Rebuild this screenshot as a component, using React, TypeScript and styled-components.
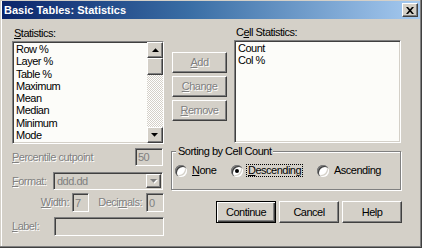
import React from 'react';
import styled, { createGlobalStyle, css } from 'styled-components';

const Global = createGlobalStyle`
  html, body { margin: 0; padding: 0; background: #d4d0c8; }
  body { font-family: "Liberation Sans", Arial, sans-serif; font-size: 11px; }
  * { box-sizing: border-box; }
`;

const raised = css`
  border: 1px solid;
  border-color: #ffffff #404040 #404040 #ffffff;
  box-shadow: inset -1px -1px #808080, inset 1px 1px #d4d0c8;
  background: #d4d0c8;
`;

const sunken = css`
  border: 1px solid;
  border-color: #808080 #ffffff #ffffff #808080;
  box-shadow: inset 1px 1px #404040, inset -1px -1px #d4d0c8;
`;

const disabledText = css`
  color: #808080;
  text-shadow: 1px 1px #ffffff;
`;

const Window = styled.div`
  width: 422px;
  height: 248px;
  background: #d4d0c8;
  padding: 1px 2px 2px 2px;
  box-shadow: inset -1px -1px #404040, inset -2px -2px #808080, inset 1px 1px #d4d0c8, inset 2px 0 #ffffff;
  display: flex;
  flex-direction: column;
  font-family: "Liberation Sans", Arial, sans-serif;
  font-size: 11px;
  letter-spacing: -0.5px;
  color: #000;
`;

const TitleBar = styled.div`
  height: 18px;
  flex: none;
  display: flex;
  align-items: center;
  justify-content: space-between;
  padding: 0 2px 0 2px;
  background: linear-gradient(to right, #0a246a, #3a6ea5 45%, #a6caf0);
`;

const TitleText = styled.span`
  color: #ffffff;
  font-weight: bold;
  font-size: 11px;
  letter-spacing: 0;
  line-height: 13px;
`;

const CloseButton = styled.div`
  ${raised};
  width: 16px;
  height: 14px;
  display: flex;
  align-items: center;
  justify-content: center;
`;

const Body = styled.div`
  flex: 1;
  display: flex;
  gap: 7px;
  padding: 8px 0 0 10px;
`;

const LeftCol = styled.div`
  width: 152px;
  display: flex;
  flex-direction: column;
`;

const RightCol = styled.div`
  width: 231px;
  margin-top: -1px;
  display: flex;
  flex-direction: column;
`;

const Caption = styled.div<{ $disabled?: boolean; $indent?: number }>`
  height: 13px;
  line-height: 13px;
  white-space: nowrap;
  padding-left: ${(p) => p.$indent ?? 0}px;
  ${(p) => p.$disabled && disabledText};
`;

const ListBox = styled.div<{ $w: number }>`
  ${sunken};
  width: ${(p) => p.$w}px;
  height: 103px;
  margin-top: 1px;
  display: flex;
  background: #fcfcf9;
  overflow: hidden;
`;

const ListItems = styled.div`
  flex: 1;
  padding: 1px 0 0 3px;
  overflow: hidden;
`;

const ListItem = styled.div`
  height: 12.3px;
  line-height: 12.3px;
  white-space: nowrap;
`;

const ScrollBar = styled.div`
  width: 16px;
  flex: none;
  display: flex;
  flex-direction: column;
`;

const ScrollButton = styled.div`
  ${raised};
  width: 16px;
  height: 16px;
  flex: none;
  display: flex;
  align-items: center;
  justify-content: center;
`;

const Track = styled.div`
  flex: 1;
  background-color: #ffffff;
  background-image: conic-gradient(#d4d0c8 25%, transparent 0 50%, #d4d0c8 0 75%, transparent 0);
  background-size: 2px 2px;
`;

const Thumb = styled.div`
  ${raised};
  width: 16px;
  height: 17px;
`;

const FieldRow = styled.div<{ $h: number; $mt: number }>`
  height: ${(p) => p.$h}px;
  margin-top: ${(p) => p.$mt}px;
  display: flex;
  align-items: center;
`;

const RowLabel = styled.div<{ $w?: number; $right?: boolean; $pr?: number; $ml?: number }>`
  ${disabledText};
  width: ${(p) => (p.$w ? `${p.$w}px` : 'auto')};
  flex: ${(p) => (p.$w ? 'none' : '1')};
  margin-left: ${(p) => p.$ml ?? 0}px;
  padding-right: ${(p) => p.$pr ?? 0}px;
  text-align: ${(p) => (p.$right ? 'right' : 'left')};
  white-space: nowrap;
  line-height: 13px;
`;

const TextBox = styled.div<{ $w: number; $mr?: number }>`
  ${sunken};
  width: ${(p) => p.$w}px;
  height: 100%;
  flex: none;
  margin-right: ${(p) => p.$mr ?? 0}px;
  background: #d4d0c8;
  color: #808080;
  padding-left: 2px;
  display: flex;
  align-items: center;
  white-space: nowrap;
  overflow: hidden;
`;

const Combo = styled.div`
  ${sunken};
  width: 110px;
  height: 100%;
  margin-right: 1px;
  background: #d4d0c8;
  color: #808080;
  display: flex;
  align-items: center;
  padding: 1px 1px 1px 3px;
`;

const ComboText = styled.span`
  flex: 1;
`;

const ComboButton = styled.div`
  ${raised};
  width: 15px;
  height: 100%;
  display: flex;
  align-items: center;
  justify-content: center;
`;

const TopRow = styled.div`
  display: flex;
  gap: 7px;
`;

const ButtonCol = styled.div`
  width: 55px;
  margin-left: 1px;
  padding-top: 26px;
  display: flex;
  flex-direction: column;
  gap: 3px;
`;

const CellCol = styled.div`
  width: 167px;
  display: flex;
  flex-direction: column;
`;

const PushButton = styled.button<{ $default?: boolean; $h: number; $w?: number }>`
  ${raised};
  height: ${(p) => p.$h}px;
  width: ${(p) => (p.$w ? `${p.$w}px` : '100%')};
  padding: 0;
  margin: 0;
  font-family: inherit;
  font-size: 11px;
  letter-spacing: -0.5px;
  color: #000;
  line-height: 13px;
  &:disabled {
    ${disabledText};
  }
  ${(p) =>
    p.$default &&
    css`
      border: 1px solid #000;
      box-shadow: inset 1px 1px #ffffff, inset -1px -1px #404040, inset -2px -2px #808080;
    `}
`;

const Group = styled.fieldset`
  margin: 2px 0 0 0;
  width: 230px;
  padding: 6px 2px 12px 3px;
  border: 1px solid #808080;
  box-shadow: inset 1px 1px #ffffff, 1px 1px #ffffff;
`;

const GroupTitle = styled.legend`
  margin-left: 1px;
  padding: 0 2px;
  line-height: 13px;
  height: 13px;
  background: #d4d0c8;
`;

const RadioRow = styled.div`
  display: grid;
  grid-template-columns: 56px 86px auto;
  height: 13px;
`;

const RadioItem = styled.label`
  display: flex;
  align-items: center;
  gap: 3px;
`;

const RadioDot = styled.span<{ $checked?: boolean }>`
  width: 12px;
  height: 12px;
  flex: none;
  border-radius: 50%;
  background: #ffffff;
  box-shadow: inset 1px 1px #808080, inset 2px 2px #404040, inset -1px -1px #ffffff, inset -2px -2px #d4d0c8;
  display: flex;
  align-items: center;
  justify-content: center;
  &::after {
    content: '';
    width: 4px;
    height: 4px;
    border-radius: 50%;
    background: #000;
    display: ${(p) => (p.$checked ? 'block' : 'none')};
  }
`;

const RadioText = styled.span<{ $focused?: boolean }>`
  padding: 0 1px;
  line-height: 11px;
  border: 1px dotted ${(p) => (p.$focused ? '#000' : 'transparent')};
  white-space: nowrap;
`;

const ButtonRow = styled.div`
  margin-top: 11px;
  display: flex;
  justify-content: flex-end;
  gap: 3px;
`;

const UpArrow = ({ color = '#000' }: { color?: string }) => (
  <svg width="7" height="4" viewBox="0 0 7 4">
    <polygon points="0,4 7,4 3.5,0.3" fill={color} />
  </svg>
);

const DownArrow = ({ disabled }: { disabled?: boolean }) => (
  <svg width="8" height="5" viewBox="0 0 8 5">
    {disabled && <polygon points="1,1 8,1 4.5,4.7" fill="#ffffff" />}
    <polygon points="0,0 7,0 3.5,3.7" fill={disabled ? '#808080' : '#000'} />
  </svg>
);

const statistics = ['Row %', 'Layer %', 'Table %', 'Maximum', 'Mean', 'Median', 'Minimum', 'Mode'];
const cellStatistics = ['Count', 'Col %'];

export default function App() {
  return (
    <>
      <Global />
      <Window>
        <TitleBar>
          <TitleText>Basic Tables: Statistics</TitleText>
          <CloseButton>
            <svg width="8" height="7" viewBox="0 0 8 7">
              <path d="M0 0 H2 L4 2.3 L6 0 H8 L5.1 3.5 L8 7 H6 L4 4.7 L2 7 H0 L2.9 3.5 Z" fill="#000" />
            </svg>
          </CloseButton>
        </TitleBar>
        <Body>
          <LeftCol>
            <Caption $indent={2}>
              <u>S</u>tatistics:
            </Caption>
            <ListBox $w={152}>
              <ListItems>
                {statistics.map((s) => (
                  <ListItem key={s}>{s}</ListItem>
                ))}
              </ListItems>
              <ScrollBar>
                <ScrollButton>
                  <UpArrow />
                </ScrollButton>
                <Track>
                  <Thumb />
                </Track>
                <ScrollButton>
                  <DownArrow />
                </ScrollButton>
              </ScrollBar>
            </ListBox>
            <FieldRow $h={18} $mt={4}>
              <RowLabel>
                <u>P</u>ercentile cutpoint
              </RowLabel>
              <TextBox $w={28} $mr={1}>
                50
              </TextBox>
            </FieldRow>
            <FieldRow $h={18} $mt={6}>
              <RowLabel $w={41}>
                <u>F</u>ormat:
              </RowLabel>
              <Combo>
                <ComboText>ddd.dd</ComboText>
                <ComboButton>
                  <DownArrow disabled />
                </ComboButton>
              </Combo>
            </FieldRow>
            <FieldRow $h={19} $mt={3}>
              <RowLabel $w={37} $ml={23} $right $pr={3}>
                <u>W</u>idth:
              </RowLabel>
              <TextBox $w={17}>7</TextBox>
              <RowLabel $w={57} $right $pr={4}>
                Deci<u>m</u>als:
              </RowLabel>
              <TextBox $w={18}>0</TextBox>
            </FieldRow>
            <FieldRow $h={19} $mt={5}>
              <RowLabel $w={42}>
                <u>L</u>abel:
              </RowLabel>
              <TextBox $w={110} />
            </FieldRow>
          </LeftCol>
          <RightCol>
            <TopRow>
              <ButtonCol>
                <PushButton $h={21} disabled>
                  <u>A</u>dd
                </PushButton>
                <PushButton $h={21} disabled>
                  <u>C</u>hange
                </PushButton>
                <PushButton $h={21} disabled>
                  <u>R</u>emove
                </PushButton>
              </ButtonCol>
              <CellCol>
                <Caption $indent={2}>
                  C<u>e</u>ll Statistics:
                </Caption>
                <ListBox $w={167}>
                  <ListItems>
                    {cellStatistics.map((s) => (
                      <ListItem key={s}>{s}</ListItem>
                    ))}
                  </ListItems>
                </ListBox>
              </CellCol>
            </TopRow>
            <Group>
              <GroupTitle>Sorting by Cell Count</GroupTitle>
              <RadioRow>
                <RadioItem>
                  <RadioDot />
                  <RadioText>
                    <u>N</u>one
                  </RadioText>
                </RadioItem>
                <RadioItem>
                  <RadioDot $checked />
                  <RadioText $focused>
                    <u>D</u>escending
                  </RadioText>
                </RadioItem>
                <RadioItem>
                  <RadioDot />
                  <RadioText>Ascending</RadioText>
                </RadioItem>
              </RadioRow>
            </Group>
            <ButtonRow>
              <PushButton $h={22} $w={60} $default>
                Continue
              </PushButton>
              <PushButton $h={22} $w={60}>
                Cancel
              </PushButton>
              <PushButton $h={22} $w={60}>
                Help
              </PushButton>
            </ButtonRow>
          </RightCol>
        </Body>
      </Window>
    </>
  );
}
